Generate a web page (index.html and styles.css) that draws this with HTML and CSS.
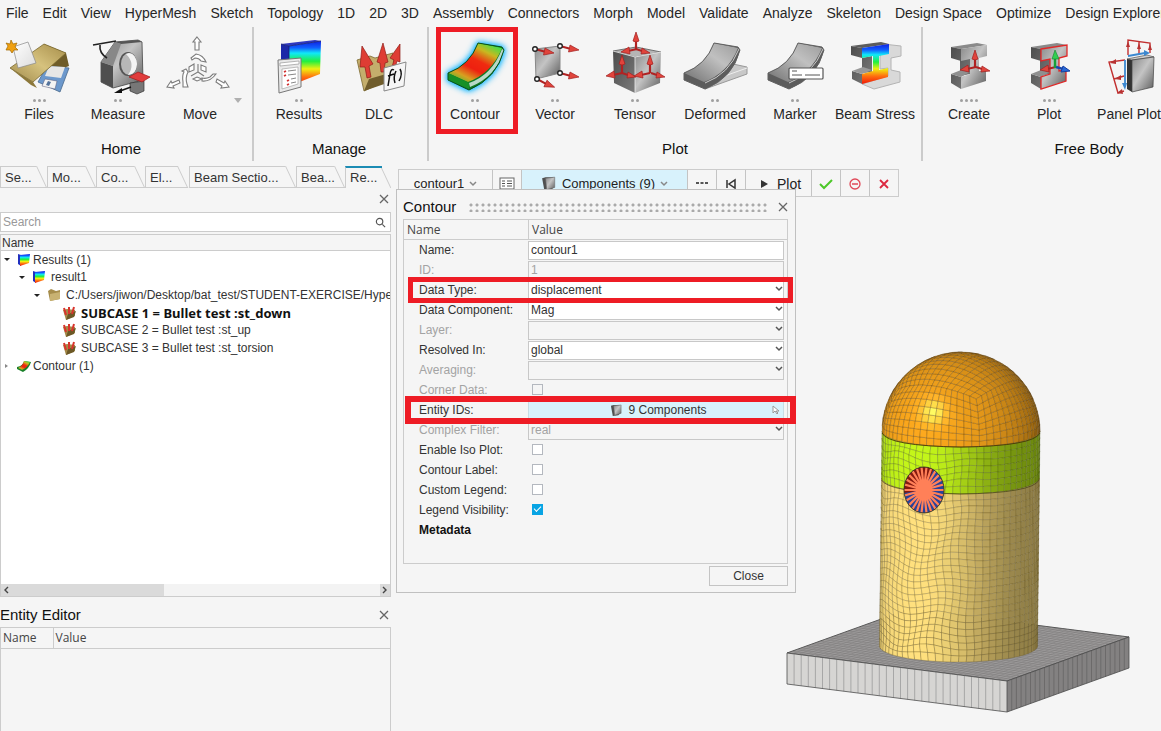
FILE: index.html
```html
<!DOCTYPE html>
<html lang="en">
<head>
<meta charset="utf-8">
<title>HyperMesh</title>
<link rel="stylesheet" href="styles.css">
</head>
<body>
<svg class="defs" aria-hidden="true">
  <defs>
    <linearGradient id="steel" x1="0" y1="0" x2="1" y2="1"><stop offset="0" stop-color="#8a8a8a"/><stop offset=".45" stop-color="#c4c4c4"/><stop offset="1" stop-color="#5a5a5a"/></linearGradient>
    <linearGradient id="steelDark" x1="0" y1="0" x2="1" y2="1"><stop offset="0" stop-color="#4c4c4c"/><stop offset="1" stop-color="#7c7c7c"/></linearGradient>
    <linearGradient id="sheetGray" x1="1" y1="0" x2="0" y2="1"><stop offset="0" stop-color="#9c9c9c"/><stop offset=".4" stop-color="#c0c0c0"/><stop offset="1" stop-color="#707070"/></linearGradient>
    <linearGradient id="sheetHeat" x1=".8" y1="0" x2=".1" y2="1"><stop offset="0" stop-color="#3fe04a"/><stop offset=".2" stop-color="#c8b820"/><stop offset=".42" stop-color="#f02a10"/><stop offset=".6" stop-color="#ee2010"/><stop offset=".8" stop-color="#d8a020"/><stop offset="1" stop-color="#30c838"/></linearGradient>
    <linearGradient id="rainbow" x1="0" y1="0" x2="0" y2="1"><stop offset="0" stop-color="#1020e0"/><stop offset=".15" stop-color="#1060ff"/><stop offset=".27" stop-color="#10e8f8"/><stop offset=".45" stop-color="#20f040"/><stop offset=".62" stop-color="#f0f010"/><stop offset=".8" stop-color="#ff7010"/><stop offset="1" stop-color="#f01808"/></linearGradient>
    <linearGradient id="folder" x1="0" y1="1" x2="1" y2="0"><stop offset="0" stop-color="#a08a4c"/><stop offset=".5" stop-color="#d6c27e"/><stop offset="1" stop-color="#a58c48"/></linearGradient>
    <linearGradient id="paper" x1="0" y1="0" x2="1" y2="1"><stop offset="0" stop-color="#fff"/><stop offset="1" stop-color="#dcdcdc"/></linearGradient>
    <g id="arrowUp"><path d="M0 0V-10" stroke="#b02222" stroke-width="2.2"/><path d="M-3 -9L0 -18L3 -9Q0 -7 -3 -9Z" fill="#e0443c" stroke="#a02020" stroke-width=".7"/></g>
    <g id="arrowRight"><path d="M0 0L11 3" stroke="#b02222" stroke-width="2"/><path d="M10 -1L19 4L8.500 6Z" fill="#e0443c" stroke="#a02020" stroke-width=".7"/></g>
    <g id="arrowLeft"><path d="M0 0L-9 2" stroke="#b02222" stroke-width="2"/><path d="M-8 -2L-16 3L-7 5Z" fill="#e0443c" stroke="#a02020" stroke-width=".7"/></g>
    <g id="arrowShort"><path d="M0 0L6 2" stroke="#b02222" stroke-width="2"/><path d="M6 -1L14 4L5 5Z" fill="#e0443c" stroke="#a02020" stroke-width=".7"/></g>
    <g id="sheet">
      <path d="M35 7Q27 29 5 37L5 44L26 53Q54 42 61 14L59 11Z" fill="#5c5c5c"/>
      <path d="M35 7Q27 29 5 37L25 46Q49 37 59 12Z" fill="url(#sheetGray)"/>
      <path d="M26 47Q50 38 60 13" fill="none" stroke="#ccc" stroke-width="1"/>
      <path d="M35 7Q27 29 5 37V44L26 53Q54 42 61 14L59 11Z" fill="none" stroke="#606060" stroke-width="1"/>
    </g>
    <g id="beam">
      <path d="M14 11L40 7L50 9L24 13Z" fill="#8a8a8a"/>
      <path d="M14 11L24 13V25L14 22ZM14 38L24 41V53L14 47ZM23 24L33 22V38L23 40Z" fill="url(#steelDark)"/>
      <path d="M14 38L24 34L33 36L24 41Z" fill="#8f8f8f"/>
      <path d="M24 13L50 9V20L42 22V35L49 34V45L24 53V41L33 38V23L24 25Z" fill="url(#steel)"/>
    </g>
    <g id="miniSlab"><path d="M1 1L4 2V13L1 11Z" fill="#2030c0"/><path d="M3 2L13 1L12 10L3 13Z" fill="url(#rainbow)"/></g>
    <g id="miniCase"><path d="M1 4L5 3L13 4V10L4 14Z" fill="#a48a48"/><path d="M4 14L6 8L14 5L12 11Z" fill="#6c5826"/><path d="M2 2L4 9M7 1L7 8M12 1L10 8" stroke="#d8342c" stroke-width="2"/></g>
    <g id="miniPart"><path d="M1 2L4 1L11 1L11 10L9 12L3 13Z" fill="#505050"/><path d="M4 2L12 1L12 10L5 12Z" fill="url(#steel)" stroke="#666" stroke-width=".5"/></g>
  </defs>
</svg>

<nav class="menu">
  <a href="#">File</a><a href="#">Edit</a><a href="#">View</a><a href="#">HyperMesh</a><a href="#">Sketch</a><a href="#">Topology</a><a href="#">1D</a><a href="#">2D</a><a href="#">3D</a><a href="#">Assembly</a><a href="#">Connectors</a><a href="#">Morph</a><a href="#">Model</a><a href="#">Validate</a><a href="#">Analyze</a><a href="#">Skeleton</a><a href="#">Design Space</a><a href="#">Optimize</a><a href="#">Design Explorer</a>
</nav>

<div class="ribbon">
  <section class="group home">
    <div class="tools">
      <button class="tool narrow">
        <svg viewBox="0 0 64 60"><path d="M37 8L59 17L62 30L40 38Z" fill="#6f5c28"/><path d="M31 46L40 30L62 32L53 56Z" fill="#6c98cc" stroke="#48688c" stroke-width=".8"/><path d="M42 30L58 31L54 42L38 40Z" fill="#e6e6e6"/><path d="M38 43L50 45L48 53L35 50Z" fill="#f4f4f4" stroke="#557" stroke-width=".5"/><path d="M41 45L44 46L42 50L39 49Z" fill="#55739c"/><path d="M3 32L37 8L59 17L26 46Z" fill="url(#folder)" stroke="#7a682f" stroke-width=".8"/><path d="M3 32L26 46L30 52L24 49Z" fill="#8c783a"/><path d="M6 11L21 6L29 27L11 32Z" fill="url(#paper)" stroke="#888" stroke-width=".7"/><path d="M4 4L6 8L10 7L8 11L11 14L7 14L5 17L3 14L-1 14L1 10L-1 7L3 8Z" fill="#f0a010" stroke="#a06800" stroke-width=".7"/></svg>
        <span class="dots"><i></i><i></i><i></i></span><span class="name">Files</span>
      </button>
      <button class="tool">
        <svg viewBox="0 0 64 60"><path d="M15 26L29 6L52 4L56 6L57 44L27 52L15 46Z" fill="url(#steel)" stroke="#444" stroke-width=".8"/><path d="M15 26L27 30V52L15 46Z" fill="#4e4e4e"/><path d="M29 6L52 4L56 6L35 8Z" fill="#555"/><path d="M15 26L29 6L35 8L27 30Z" fill="#888"/><ellipse cx="42" cy="28" rx="9" ry="12" fill="#555"/><ellipse cx="43" cy="28" rx="8" ry="11" fill="#b8b8b8"/><path d="M40 18Q50 28 42 39Q50 39 51 28Q50 18 43 17Z" fill="#f4f4f4"/><path d="M7 9L30 5M14 9Q13 17 21 22" fill="none" stroke="#222" stroke-width="1.600"/><path d="M44 47L58 45V55L51 58L44 55Z" fill="#777" stroke="#333" stroke-width=".7"/><path d="M45 51L34 55" stroke="#111" stroke-width="1.500"/><path d="M28 57L36 52L36 57Z" fill="#111"/><path d="M43 41L52 36L64 41L56 46Z" fill="#e03c3c" stroke="#a01818" stroke-width=".7"/></svg>
        <span class="dots"><i></i><i></i></span><span class="name">Measure</span>
      </button>
      <button class="tool wide">
        <svg viewBox="0 0 64 60"><g fill="#fff" stroke="#7c7c7c" stroke-width="1.100"><path d="M29 1L33 6H31V14H27V6H25Z"/><path d="M-1 51L3 45L4 47L11 44L12 47L5 50L6 52Z"/><path d="M61 51L57 45L56 47L49 43L48 46L54 50L53 52Z"/><path d="M23 22L28 18Q35 19 38 26L33 25Q31 22 27 22L24 24Z"/><path d="M18 33L20 36Q17 42 19 48L20 51L15 51V46Q14 39 16 36L14 35Z"/><path d="M34 45Q42 46 48 38L45 38L42 41Q38 43 34 42Z"/><path d="M21 31L26 28V34L21 36ZM33 29L38 31V36L33 34ZM25 43L29 41L34 43L29 45Z"/><path d="M30 28V36L23 40M30 36L36 40" fill="none"/></g></svg>
        <span class="dots"></span><span class="name">Move</span><span class="more"></span>
      </button>
    </div>
    <h2>Home</h2>
  </section>
  <section class="group manage">
    <div class="tools">
      <button class="tool">
        <svg viewBox="0 0 64 60"><path d="M14 8L48 4L54 5L22 10Z" fill="#3038c0"/><path d="M14 8L22 10V50L14 45Z" fill="#1c28a8"/><path d="M22 10L54 5L53 38L22 50Z" fill="url(#rainbow)"/><path d="M14 8L22 10L54 5M22 10V24" fill="none" stroke="#182070" stroke-width=".8"/><path d="M11 24L34 22V51L12 57Z" fill="#e9e9e9" stroke="#777" stroke-width="1"/><path d="M13 27L32 25V28L13 30Z" fill="#fff" stroke="#888" stroke-width=".6"/><path d="M15 33L31 31V48L15 53Z" fill="#fff" stroke="#999" stroke-width=".6"/><path d="M17 36L19 35M17 40L19 39M20 45L22 44M20 49L22 48" stroke="#d03030" stroke-width="1.800"/><path d="M21 35L29 34M21 39L29 38M24 43L29 42M24 47L29 46" stroke="#888"/></svg>
        <span class="dots"><i></i><i></i></span><span class="name">Results</span>
      </button>
      <button class="tool">
        <svg viewBox="0 0 64 60"><path d="M10 24L23 20L28 22L46 17L48 41L17 55Z" fill="#c4ae6c" stroke="#7b6830" stroke-width=".8"/><path d="M17 55L22 43L46 36V45Z" fill="#705d2c"/><g fill="#de3d34" stroke="#8f1c18" stroke-width=".7"><path d="M15 10L26 28L22 30L24 41L20 42L18 31L13 31Z"/><path d="M36 7L41 26L38 27L37 36L34 36L33 27L30 26Z"/><path d="M53 8L53 26L50 25L48 32L45 31L47 24L43 22Z"/></g><path d="M37 32L59 26L57 50L37 55Z" fill="#f6f6f6" stroke="#888"/><path d="M47 34Q44 32 43 38L41 50M41 40L47 38M49 35Q46 41 48 47M53 33Q56 38 52 45" fill="none" stroke="#111" stroke-width="1.500"/></svg>
        <span class="dots"></span><span class="name">DLC</span>
      </button>
    </div>
    <h2>Manage</h2>
  </section>
  <section class="group plot">
    <div class="tools">
      <button class="tool marked">
        <svg class="glow" viewBox="0 0 64 60"><path d="M35 7Q27 29 5 37V44L26 54Q54 42 61 14L59 11Z" fill="#0f7a24"/><path d="M35 7Q27 29 5 37L25 46Q49 37 59 12Z" fill="url(#sheetHeat)"/><path d="M26 47V53L5 44V37Z" fill="#169026"/><path d="M27 51Q53 41 61 14L59 13Q49 39 26 47Z" fill="#b8d8c8"/><path d="M35 7Q27 29 5 37V44L26 54Q54 42 61 14L59 11Z" fill="none" stroke="#085018"/></svg>
        <span class="dots"><i></i><i></i></span><span class="name">Contour</span>
      </button>
      <button class="tool">
        <svg viewBox="0 0 64 60"><path d="M12 13L37 10V37L13 43Z" fill="url(#steel)" stroke="#888"/><use href="#arrowRight" x="12" y="13"/><use href="#arrowRight" x="37" y="10"/><use href="#arrowRight" x="37" y="37"/><use href="#arrowRight" transform="translate(14 43) rotate(13)"/><g fill="#fff" stroke="#222" stroke-width="1.400"><circle cx="12" cy="13" r="2.300"/><circle cx="37" cy="10" r="2.300"/><circle cx="37" cy="37" r="2.300"/><circle cx="14" cy="43" r="2.300"/></g></svg>
        <span class="dots"><i></i><i></i></span><span class="name">Vector</span>
      </button>
      <button class="tool">
        <svg viewBox="0 0 64 60"><path d="M10 15L33 11L58 16L32 21Z" fill="#b5b5b5" stroke="#555" stroke-width=".8"/><path d="M10 15L32 21V57L11 47Z" fill="url(#steelDark)"/><path d="M58 16L32 21V57L57 47Z" fill="url(#steel)"/><path d="M10 15L32 21L58 16M32 21V57" fill="none" stroke="#eee" stroke-width=".8"/><use href="#arrowUp" x="33" y="14"/><use href="#arrowLeft" x="34" y="13"/><use href="#arrowShort" x="33" y="13"/><use href="#arrowLeft" x="19" y="37"/><use href="#arrowUp" x="19" y="37"/><use href="#arrowShort" x="19" y="37"/><use href="#arrowLeft" x="47" y="37"/><use href="#arrowUp" x="47" y="37"/><use href="#arrowShort" x="48" y="37"/></svg>
        <span class="dots"><i></i><i></i></span><span class="name">Tensor</span>
      </button>
      <button class="tool">
        <svg viewBox="0 0 64 60"><path d="M22 53L64 38V31L50 28L20 45Z" fill="#c8c8c8" stroke="#999"/><path d="M22 47L64 32" stroke="#eee"/><use href="#sheet" x="-4"/></svg>
        <span class="dots"><i></i><i></i></span><span class="name">Deformed</span>
      </button>
      <button class="tool">
        <svg viewBox="0 0 64 60"><use href="#sheet"/><rect x="26" y="32" width="34" height="11" rx="1" fill="#fff" stroke="#555" stroke-width="1.200"/><path d="M29 35H34M29 39H39M42 39H57" stroke="#555"/></svg>
        <span class="dots"><i></i><i></i></span><span class="name">Marker</span>
      </button>
      <button class="tool">
        <svg viewBox="0 0 64 60"><path d="M40 8L58 10V20L48 22V34L57 36V46L31 53L19 48L45 40V32L37 33V21Z" fill="#d9d9d9" stroke="#b4b4b4"/><path d="M8 10L38 6L46 8L19 12Z" fill="#5c5c5c"/><path d="M8 10L19 12V22L8 19ZM9 35L19 38V48L9 43ZM19 22L29 20V36L19 37Z" fill="url(#steelDark)"/><path d="M9 35L20 31L29 34L19 38Z" fill="#999"/><path d="M19 12L46 8V18L36 20V34L45 32V41L19 48V38L30 35V20L19 22Z" fill="url(#rainbow)"/></svg>
        <span class="dots"></span><span class="name">Beam Stress</span>
      </button>
    </div>
    <h2>Plot</h2>
  </section>
  <section class="group body">
    <div class="tools">
      <button class="tool">
        <svg viewBox="0 0 64 60"><use href="#beam"/><use href="#arrowUp" x="38" y="32"/><use href="#arrowLeft" transform="translate(39 31)"/><use href="#arrowShort" x="39" y="31"/></svg>
        <span class="dots"><i></i><i></i><i></i><i></i></span><span class="name">Create</span>
      </button>
      <button class="tool">
        <svg viewBox="0 0 64 60"><use href="#beam"/><path d="M24 13L50 9V20L42 22V35L49 34V45L24 53V41L33 38V23L24 25Z" fill="none" stroke="#e02828" stroke-width="1.300"/><use href="#arrowLeft" x="39" y="31"/><path d="M38 32V22" stroke="#18a038" stroke-width="2.500"/><path d="M35 23L38 14L42 23Z" fill="#30d050" stroke="#188030" stroke-width=".6"/><path d="M39 31L46 33" stroke="#1848b0" stroke-width="2.500"/><path d="M46 30L53 35L44 36Z" fill="#2868d8" stroke="#1840a0"/></svg>
        <span class="dots"><i></i><i></i><i></i></span><span class="name">Plot</span>
      </button>
      <button class="tool">
        <svg viewBox="0 0 64 60"><path d="M30 23L50 19L57 21L35 24Z" fill="#ccc" stroke="#555" stroke-width=".7"/><path d="M30 23L35 24V56L30 53Z" fill="#333"/><path d="M35 24L57 21L56 51L35 56Z" fill="url(#steel)" stroke="#444" stroke-width=".7"/><g fill="none" stroke="#c23030" stroke-width="1.400"><path d="M31 19V4L53 7V17M42 18V6M28 24L12 26L21 57L27 55M17 43L27 40"/></g><path d="M29 11L31 5L33 11ZM40 13L42 7L44 13ZM51 14L53 8L55 14ZM13 27L19 23V28ZM18 43L24 39V44ZM20 57L25 53L26 58Z" fill="#b83232"/><path d="M31 20L48 17M28 24V50" stroke="#3c88d0" stroke-width="1.800"/><path d="M47 14L53 17L47 20ZM25 47H30L28 54Z" fill="#3c88d0"/></svg>
        <span class="dots"></span><span class="name">Panel Plot</span>
      </button>
      <button class="tool"><svg viewBox="0 0 64 60"></svg><span class="dots"></span><span class="name"></span></button>
    </div>
    <h2>Free Body</h2>
  </section>
</div>

<main class="work">
  <aside class="side">
    <div class="tabs" role="tablist">
      <button class="tab t1" role="tab">Se...</button><button class="tab t2" role="tab">Mo...</button><button class="tab t2" role="tab">Co...</button><button class="tab t0" role="tab">El...</button><button class="tab t3" role="tab">Beam Sectio...</button><button class="tab t2" role="tab">Bea...</button><button class="tab active" role="tab" aria-selected="true">Re...</button>
    </div>
    <div class="closer"><button class="x" aria-label="Close browser"><svg viewBox="0 0 10 10"><path d="M1 1L9 9M9 1L1 9"/></svg></button></div>
    <div class="search"><input type="text" placeholder="Search" aria-label="Search"><svg viewBox="0 0 12 12"><circle cx="5" cy="5" r="3.500"/><path d="M8 8L11 11"/></svg></div>
    <div class="tree">
      <div class="treehead">Name</div>
      <ul>
        <li class="l0"><b class="open"></b><svg viewBox="0 0 14 14"><use href="#miniSlab"/></svg><span>Results (1)</span></li>
        <li class="l1"><b class="open"></b><svg viewBox="0 0 14 14"><use href="#miniSlab"/></svg><span class="far">result1</span></li>
        <li class="l2"><b class="open"></b><svg viewBox="0 0 14 14"><path d="M1 3L4 1L9 3L13 2V11L3 13Z" fill="#a68d4c"/><path d="M3 6L13 4V11L3 13Z" fill="#c8b272"/></svg><span class="far">C:/Users/jiwon/Desktop/bat_test/STUDENT-EXERCISE/Hype</span></li>
        <li class="l3"><svg viewBox="0 0 14 14"><use href="#miniCase"/></svg><span class="far current">SUBCASE 1 = Bullet test :st_down</span></li>
        <li class="l3"><svg viewBox="0 0 14 14"><use href="#miniCase"/></svg><span class="far">SUBCASE 2 = Bullet test :st_up</span></li>
        <li class="l3"><svg viewBox="0 0 14 14"><use href="#miniCase"/></svg><span class="far">SUBCASE 3 = Bullet test :st_torsion</span></li>
        <li class="l0"><b class="shut"></b><svg viewBox="0 0 14 14"><path d="M7 2L14 3Q12 10 6 13L0 10V8Q6 7 7 2Z" fill="#188028"/><path d="M7 2L13 3Q11 8 5 11L1 9Q6 7 7 2Z" fill="url(#sheetHeat)"/></svg><span>Contour (1)</span></li>
      </ul>
      <div class="hscroll"><span class="cap thumb"><svg viewBox="0 0 8 8"><path d="M6 1L3 4L6 7"/></svg></span><span class="cap"><svg viewBox="0 0 8 8"><path d="M2 1L5 4L2 7"/></svg></span></div>
    </div>
    <div class="entity">
      <header><h3>Entity Editor</h3><button class="x" aria-label="Close entity editor"><svg viewBox="0 0 10 10"><path d="M1 1L9 9M9 1L1 9"/></svg></button></header>
      <div class="sheetbox"><table><thead><tr><th class="key">Name</th><th>Value</th></tr></thead></table></div>
    </div>
  </aside>

  <section class="view">
    <div class="bar">
      <button class="b-name">contour1 <svg class="chev" viewBox="0 0 8 6"><path d="M1 1L4 4L7 1"/></svg></button>
      <button class="b-icon" aria-label="List"><svg class="i16" viewBox="0 0 16 16"><rect x="1" y="2" width="14" height="11" fill="#fff" stroke="#666"/><path d="M3 5H6M3 7.500H6M3 10H6M8 5H13M8 7.500H13M8 10H13" stroke="#555"/></svg></button>
      <button class="b-comp"><svg class="i16" viewBox="0 0 14 14"><use href="#miniPart"/></svg>Components (9) <svg class="chev" viewBox="0 0 8 6"><path d="M1 1L4 4L7 1"/></svg></button>
      <button class="b-icon" aria-label="More"><svg class="i16" viewBox="0 0 16 16"><path d="M2 7H5M6.500 7H9.500M11 7H14" stroke="#555" stroke-width="2"/></svg></button>
      <button class="b-icon" aria-label="First"><svg class="i16" viewBox="0 0 16 16"><path d="M4 4V12M12 4V12L6 8Z" fill="none" stroke="#333" stroke-width="1.500"/></svg></button>
      <button class="b-plot"><svg class="i16" viewBox="0 0 16 16"><path d="M5 4L12 8L5 12Z" fill="#333"/></svg>Plot</button>
      <button class="b-icon" aria-label="Apply"><svg class="i16" viewBox="0 0 16 16"><path d="M2 8L6 12L14 4" fill="none" stroke="#4cc828" stroke-width="2"/></svg></button>
      <button class="b-icon" aria-label="Remove"><svg class="i16" viewBox="0 0 16 16"><circle cx="8" cy="8" r="5" fill="none" stroke="#e04858" stroke-width="1.300"/><path d="M5 8H11" stroke="#e04858" stroke-width="1.500"/></svg></button>
      <button class="b-icon" aria-label="Cancel"><svg class="i16" viewBox="0 0 16 16"><path d="M4 4L12 12M12 4L4 12" stroke="#dc2840" stroke-width="1.800"/></svg></button>
    </div>

    <svg class="model" id="model" viewBox="780 345 355 375" role="img" aria-label="Meshed bullet model">
      <defs><clipPath id="port"><ellipse cx="924" cy="490" rx="20" ry="23"/></clipPath></defs>
      <polygon points="787,653 909,609 1129,637 1007,681" fill="#9c9a9a" stroke="#555"/>
      <polygon points="787,653 1007,681 1007,712 787,684" fill="#d6d5d3"/>
      <polygon points="1007,681 1129,637 1129,668 1007,712" fill="#838181"/>
      <path id="plateMesh" fill="none" stroke="#7d7b7b" stroke-width=".5"/>
      <path id="frontLines" fill="none" stroke="#a2a2a2" stroke-width=".9"/>
      <path id="sideLines" fill="none" stroke="#666464" stroke-width=".8"/>
      <path d="M787 653L1007 681L1129 637V668L1007 712L787 684ZM1007 681V712" fill="none" stroke="#4c4c4c" stroke-width=".8"/>
      <g id="shell"></g>
      <path d="M882 433Q888 446 961 447Q1034 446 1040 433" fill="none" stroke="#4c3808" stroke-width=".9"/>
      <path d="M881.500 480Q888 492 960 494Q1033 493 1039 480" fill="none" stroke="#4c4a18" stroke-width=".8"/>
      <g clip-path="url(#port)">
        <rect x="900" y="464" width="48" height="54" fill="#26429c"/>
        <polygon points="924,490 898,494 898,464 936,464" fill="#85190f"/>
        <path id="spokes" stroke="#ff8058" stroke-width="2.200"/>
        <ellipse cx="924" cy="490" rx="8" ry="9" fill="#ff8058"/>
      </g>
      <ellipse cx="924" cy="490" rx="20" ry="23" fill="none" stroke="#3b3420" stroke-width=".9"/>
    </svg>

    <form class="dialog">
      <header><h3>Contour</h3><span class="grip"></span><button type="button" class="x" aria-label="Close dialog"><svg viewBox="0 0 10 10"><path d="M1 1L9 9M9 1L1 9"/></svg></button></header>
      <div class="props">
        <div class="row head"><span>Name</span><span>Value</span></div>
        <div class="row"><label for="f1">Name:</label><div class="cell"><input id="f1" type="text" value="contour1"></div></div>
        <div class="row off"><label for="f2">ID:</label><div class="cell"><input id="f2" type="text" value="1" disabled></div></div>
        <div class="row mark"><label for="f3">Data Type:</label><div class="cell"><select id="f3"><option>displacement</option></select><svg class="drop" viewBox="0 0 8 6"><path d="M1 1L4 4L7 1"/></svg></div></div>
        <div class="row"><label for="f4">Data Component:</label><div class="cell"><select id="f4"><option>Mag</option></select><svg class="drop" viewBox="0 0 8 6"><path d="M1 1L4 4L7 1"/></svg></div></div>
        <div class="row off"><label for="f5">Layer:</label><div class="cell"><select id="f5" disabled><option></option></select><svg class="drop" viewBox="0 0 8 6"><path d="M1 1L4 4L7 1"/></svg></div></div>
        <div class="row"><label for="f6">Resolved In:</label><div class="cell"><select id="f6"><option>global</option></select><svg class="drop" viewBox="0 0 8 6"><path d="M1 1L4 4L7 1"/></svg></div></div>
        <div class="row off"><label for="f7">Averaging:</label><div class="cell"><select id="f7" disabled><option></option></select><svg class="drop" viewBox="0 0 8 6"><path d="M1 1L4 4L7 1"/></svg></div></div>
        <div class="row off"><label for="f8">Corner Data:</label><div class="cell"><input id="f8" type="checkbox" disabled></div></div>
        <div class="row mark big"><label for="f9">Entity IDs:</label><div class="cell"><button type="button" id="f9" class="pick"><svg class="i14" viewBox="0 0 14 14"><use href="#miniPart"/></svg>9 Components<svg class="cursor" viewBox="0 0 8 10"><path d="M1 1L1 8L3 6L5 9L6 8L4 6L7 6Z"/></svg></button></div></div>
        <div class="row off"><label for="f10">Complex Filter:</label><div class="cell"><select id="f10" disabled><option>real</option></select><svg class="drop" viewBox="0 0 8 6"><path d="M1 1L4 4L7 1"/></svg></div></div>
        <div class="row"><label for="f11">Enable Iso Plot:</label><div class="cell"><input id="f11" type="checkbox"></div></div>
        <div class="row"><label for="f12">Contour Label:</label><div class="cell"><input id="f12" type="checkbox"></div></div>
        <div class="row"><label for="f13">Custom Legend:</label><div class="cell"><input id="f13" type="checkbox"></div></div>
        <div class="row"><label for="f14">Legend Visibility:</label><div class="cell"><input id="f14" type="checkbox" checked></div></div>
        <div class="row meta"><strong>Metadata</strong></div>
      </div>
      <footer><button type="button">Close</button></footer>
    </form>
  </section>
</main>
<script src="mesh.js"></script>
</body>
</html>
```

FILE: styles.css
```css
* { box-sizing: border-box; }
body {
  margin: 0;
  height: 100vh;
  display: flex;
  flex-direction: column;
  overflow: hidden;
  background: #f5f5f5;
  color: #333;
  font: 12px "Liberation Sans", Arial, sans-serif;
}
button, input, select { font: inherit; color: inherit; }
button { border: 0; padding: 0; background: none; }
h2, h3 { margin: 0; font-size: 15px; font-weight: normal; color: #111; line-height: 20px; }
.defs { position: absolute; width: 0; height: 0; }

.menu { display: flex; gap: 14px; padding: 5px 6px 6px; overflow: hidden; flex: none; }
.menu a { color: #262626; text-decoration: none; font-size: 14px; line-height: 16px; white-space: nowrap; flex: none; }

.ribbon { display: flex; overflow: hidden; flex: none; }
.group { position: relative; flex: none; padding: 9px 6px 2px; text-align: center; border-right: 2px solid #cbcbcb; }
.group.home { padding-left: 0; padding-right: 10px; }
.group.manage { padding-left: 5px; padding-right: 8px; }
.tools { display: flex; }
.tool { position: relative; width: 80px; display: flex; flex-direction: column; align-items: center; font-size: 14px; color: #262626; }
.tool.narrow { width: 78px; }
.tool.wide { width: 84px; }
.tool > svg { width: 64px; height: 60px; overflow: visible; }
.tool .dots { display: flex; gap: 2px; height: 8px; align-items: center; }
.tool .dots i { width: 3px; height: 3px; border-radius: 2px; background: #a0a0a0; }
.tool .name { line-height: 20px; height: 20px; white-space: nowrap; }
.more { position: absolute; right: 0; top: 62px; border: 4px solid transparent; border-top: 5px solid #b0b0b0; border-bottom: 0; }
.glow { filter: drop-shadow(0 0 3px #18b4ff) drop-shadow(0 0 2px #40c8ff); }
.marked::after { content: ""; position: absolute; inset: -9px -3px -10px 1px; border: 5px solid #ee1c25; }
.group h2 { margin-top: 15px; }

.work { flex: 1; display: flex; min-height: 0; padding-top: 5px; }
.side { width: 391px; flex: none; display: flex; flex-direction: column; min-height: 0; }
.tabs { display: flex; gap: 11px; height: 22px; overflow: hidden; flex: none; }
.tab { position: relative; height: 22px; text-align: left; padding: 0 0 0 4px; font-size: 13px; line-height: 21px; border: 1px solid #ccc; border-right: 0; white-space: nowrap; }
.tab::after { content: ""; position: absolute; top: -1px; bottom: -1px; left: 50%; right: 0; border-right: 1px solid #ccc; border-bottom: 1px solid #ccc; transform: skewX(25deg); transform-origin: top; pointer-events: none; }
.t0 { width: 33px; }
.t1 { width: 36px; }
.t2 { width: 38px; }
.t3 { width: 96px; }
.tab.active { width: 37px; border-top: 2px solid #1c8cb4; border-bottom: 0; line-height: 18px; }
.tab.active::after { border-bottom: 0; top: 0; }
.closer { display: flex; justify-content: flex-end; padding: 6px 2px 8px; flex: none; }
.x { width: 10px; height: 10px; display: flex; }
.x svg { width: 10px; height: 10px; fill: none; stroke: #666; stroke-width: 1.3; }
.search { display: flex; align-items: center; height: 20px; background: #fff; border: 1px solid #ccc; padding-right: 4px; flex: none; }
.search input { flex: 1; min-width: 0; border: 0; padding: 0 2px; background: none; outline: 0; }
.search input::placeholder { color: #999; opacity: 1; }
.search svg { width: 11px; height: 11px; fill: none; stroke: #555; stroke-width: 1.3; }
.tree { margin-top: 2px; height: 363px; flex: none; border: 1px solid #ccc; background: #fff; display: flex; flex-direction: column; }
.treehead { height: 16px; line-height: 17px; padding-left: 1px; background: #f5f5f5; border-bottom: 1px solid #ccc; }
.tree ul { list-style: none; margin: 0; padding: 0; flex: 1; overflow: hidden; }
.tree li { display: flex; align-items: center; height: 18px; white-space: nowrap; }
.tree li:nth-child(3n+1) { height: 17px; }
.tree li svg { width: 14px; height: 14px; flex: none; margin-right: 2px; }
.tree li .far { margin-left: 3px; }
.l0 { padding-left: 2px; }
.l1 { padding-left: 17px; }
.l2 { padding-left: 32px; }
.l3 { padding-left: 61px; }
.current { font: bold 13px "Noto Sans", sans-serif; color: #111; }
.open { border: 3px solid transparent; border-top-color: #222; border-bottom: 0; margin-right: 7px; margin-left: 1px; }
.shut { border: 2px solid transparent; border-left: 3px solid #888; border-right: 0; margin: 0 9px 0 2px; }
.hscroll { height: 12px; display: flex; justify-content: space-between; background: #f3f3f3; }
.cap { width: 10px; background: #dadada; display: flex; align-items: center; padding-left: 1px; }
.cap.thumb { width: 42%; }
.cap svg { width: 8px; height: 8px; fill: none; stroke: #444; stroke-width: 1.4; }
.entity { flex: 1; min-height: 0; display: flex; flex-direction: column; }
.entity header { display: flex; justify-content: space-between; align-items: center; padding: 8px 2px 2px 0; }
.sheetbox { flex: 1; border: 1px solid #ccc; border-bottom: 0; }
.sheetbox table { width: 100%; border-collapse: collapse; }
.sheetbox th { height: 20px; padding: 0 2px; text-align: left; font: 12px/18px "Open Sans", sans-serif; color: #444; border-bottom: 1px solid #ccc; }
.sheetbox .key { width: 52px; border-right: 1px solid #ccc; }

.view { flex: 1; position: relative; min-width: 0; display: flex; flex-direction: column; justify-content: space-between; padding: 3px 26px 11px 7px; }
.bar { display: flex; align-self: flex-start; height: 28px; border: 1px solid #ccc; color: #222; flex: none; }
.bar button { height: 100%; display: flex; align-items: center; justify-content: center; gap: 5px; border-left: 1px solid #c4c4c4; font-size: 13px; line-height: 26px; white-space: nowrap; padding-top: 2px; }
.bar button:first-child { border-left: 0; }
.bar .b-name { width: 93px; }
.bar .b-icon { width: 29px; }
.bar .b-comp { width: 166px; background: #d8f2fc; }
.bar .b-plot { width: 66px; font-size: 14px; }
.i16 { width: 16px; height: 16px; }
.i14 { width: 13px; height: 13px; }
.chev { width: 8px; height: 6px; fill: none; stroke: #888; stroke-width: 1.5; }
.model { width: 355px; height: 375px; align-self: flex-end; flex: none; }

.dialog { position: absolute; left: 5px; top: 23px; width: 400px; height: 404px; background: #f5f5f5; border: 1px solid #c0c0c0; padding: 7px 7px 6px 6px; display: flex; flex-direction: column; }
.dialog header { display: flex; align-items: center; gap: 13px; height: 20px; }
.dialog header h3 { line-height: 20px; }
.dialog header .x { margin-left: -4px; }
.grip { flex: 1; height: 9px; background: radial-gradient(circle at 2px 2px, #aaa 1px, transparent 2px) 0 0 / 6px 6px; }
.props { flex: 1; margin-top: 2px; border: 1px solid #ccc; }
.row { position: relative; display: grid; grid-template-columns: 124px 1fr; height: 20px; align-items: center; padding-right: 3px; }
.row label, .row strong { padding-left: 15px; line-height: 20px; }
.row.off { color: #a3a3a3; }
.head { padding-right: 0; border-bottom: 1px solid #ccc; font: 12px "Open Sans", sans-serif; color: #444; }
.head span { padding-left: 3px; line-height: 19px; }
.head span + span { border-left: 1px solid #ccc; }
.cell { position: relative; height: 20px; display: flex; align-items: center; }
.cell input[type=text], .cell select { appearance: none; width: 100%; height: 19px; border: 1px solid #c8c8c8; border-radius: 0; background: #fff; padding: 0 2px; outline: 0; }
.cell input[type=text]:disabled, .cell select:disabled { background: #f5f5f5; color: #a3a3a3; opacity: 1; }
.drop { position: absolute; right: 1px; top: 6px; width: 8px; height: 6px; fill: none; stroke: #555; stroke-width: 1.5; pointer-events: none; }
.cell input[type=checkbox] { appearance: none; width: 11px; height: 11px; margin: 0 0 2px 4px; border: 1px solid #b4b8bf; background: #fff; }
.cell input[type=checkbox]:disabled { background: #f5f5f5; }
.cell input[type=checkbox]:checked { border-color: #08a4e4; background: #08a4e4; display: grid; place-items: center; }
.cell input[type=checkbox]:checked::after { content: ""; width: 6px; height: 3px; border: solid #fff; border-width: 0 0 1px 1px; transform: rotate(-45deg); margin-bottom: 2px; }
.pick { position: relative; width: 100%; height: 19px; background: #d8f2fc; border: 1px solid #c8dce4; padding-left: 5px; display: flex; align-items: center; justify-content: center; gap: 5px; }
.cursor { position: absolute; right: 3px; width: 8px; height: 10px; fill: #fff; stroke: #999; }
.mark::after { content: ""; position: absolute; inset: -3px -6px -3px 4px; border: 5px solid #ee1c25; z-index: 1; }
.mark.big::after { inset: -4px -9px -4px 1px; border-width: 6px; }
.meta { color: #111; }
.dialog footer { display: flex; justify-content: flex-end; padding-top: 2px; }
.dialog footer button { width: 79px; height: 20px; border: 1px solid #c4c4c4; }
```

FILE: mesh.js
```js
const SVG = "http://www.w3.org/2000/svg";
const shell = document.getElementById("shell");
const R = 79, TILT = 16 / 79;
const cosT = Math.sqrt(1 - TILT * TILT);
const LIGHT = -31 * Math.PI / 180;

function quad(points, rgb, edge) {
  const p = document.createElementNS(SVG, "polygon");
  p.setAttribute("points", points.map(q => q[0].toFixed(1) + "," + q[1].toFixed(1)).join(" "));
  p.setAttribute("fill", "rgb(" + rgb.map(v => Math.max(0, Math.min(255, Math.round(v)))).join() + ")");
  p.setAttribute("stroke", edge);
  p.setAttribute("stroke-width", ".7");
  shell.appendChild(p);
}

function wallLight(a) {
  const c = Math.cos(a - LIGHT);
  return a < LIGHT ? 0.71 + 0.29 * c : 0.56 + 0.44 * Math.pow((1 + c) / 2, 5);
}

// Cylinder wall: angle measured from the viewer, rows between two heights.
function wall(top, bottom, rows, color, edge) {
  const cols = 32;
  const at = (i, j) => {
    const a = -Math.PI / 2 + Math.PI * i / cols;
    let x = R * Math.sin(a), y = top + (bottom - top) * j / rows;
    const cx = 961 - 2.5 * (y - 431) / 214;
    const rim = Math.min(1, j / 2, (rows - j) / 2);
    const inner = rim * Math.max(0, Math.min(1, (21 - i) / 8));
    x += inner * 2.2 * Math.cos(a) * Math.sin(j * 0.55 + i * 0.4);
    y += inner * 3.4 * Math.sin(i * 0.6 + j * 0.16);
    return [cx + x, y + 16 * Math.cos(a)];
  };
  for (let j = 0; j < rows; j++) for (let i = 0; i < cols; i++) {
    const f = wallLight(-Math.PI / 2 + Math.PI * (i + 0.5) / cols);
    quad([at(i, j), at(i + 1, j), at(i + 1, j + 1), at(i, j + 1)], color.map(c => c * f), edge);
  }
}

// Dome: cube faces projected on a sphere, turned so one corner faces the viewer.
function dome() {
  const n = 16, turn = 58.5 * Math.PI / 180;
  const project = v => {
    const l = Math.hypot(...v), [x, y, z] = v.map(c => c / l);
    const X = x * Math.cos(turn) + z * Math.sin(turn), Z = -x * Math.sin(turn) + z * Math.cos(turn);
    return { s: [961 + R * X, 431 - R * (y * cosT - Z * TILT)], n: [X, y * cosT - Z * TILT, Z * cosT + y * TILT] };
  };
  const t = k => Math.tan(Math.PI / 4 * (2 * k / n - 1));
  const faces = [
    [(a, b) => [a, 1, b], 0], [(a, b) => [a, b, 1], n / 2], [(a, b) => [a, b, -1], n / 2],
    [(a, b) => [1, b, a], n / 2], [(a, b) => [-1, b, a], n / 2]
  ];
  for (const [face, start] of faces) for (let i = 0; i < n; i++) for (let j = start; j < n; j++) {
    const q = [[i, j], [i + 1, j], [i + 1, j + 1], [i, j + 1]].map(([a, b]) => project(face(t(a), t(b))));
    const m = [0, 1, 2].map(k => q.reduce((s, p) => s + p.n[k], 0) / 4);
    if (m[2] < 0) continue;
    const d = m[0] * -0.5 + m[1] * 0.05 + m[2] * 0.86;
    const f = 0.66 + 0.34 * d;
    const h = Math.exp(-((m[0] + 0.35) ** 2 + (m[1] - 0.24) ** 2) / 0.024);
    quad(q.map(p => p.s), [252 * f + 60 * h, 168 * f + 85 * h, 28 * f + 70 * h], "rgba(70,45,0,.36)");
  }
}

wall(431, 478, 7, [196, 246, 26], "rgba(50,70,0,.34)");
wall(478, 646, 25, [255, 224, 126], "rgba(90,75,25,.36)");
dome();

const mix = (p, q, k) => [p[0] + (q[0] - p[0]) * k, p[1] + (q[1] - p[1]) * k];
const line = (p, q) => "M" + p.map(v => v.toFixed(1)) + "L" + q.map(v => v.toFixed(1));
const W = [787, 653], S = [1007, 681], E = [1129, 637], N = [909, 609];
let d = "";
for (let i = 1; i < 40; i++) d += line(mix(W, S, i / 40), mix(N, E, i / 40));
for (let i = 1; i < 26; i++) d += line(mix(W, N, i / 26), mix(S, E, i / 26));
document.getElementById("plateMesh").setAttribute("d", d);

d = "";
for (let i = 1; i < 31; i++) { const p = mix(W, S, i / 31); d += line(p, [p[0], p[1] + 31]); }
document.getElementById("frontLines").setAttribute("d", d);
d = "";
for (let i = 1; i < 26; i++) { const p = mix(S, E, i / 26); d += line(p, [p[0], p[1] + 31]); }
document.getElementById("sideLines").setAttribute("d", d);

d = "";
for (let i = 0; i < 26; i++) {
  const a = Math.PI * 2 * i / 26;
  d += line([924, 490], [924 + 22 * Math.cos(a), 490 + 25 * Math.sin(a)]);
}
document.getElementById("spokes").setAttribute("d", d);
```
